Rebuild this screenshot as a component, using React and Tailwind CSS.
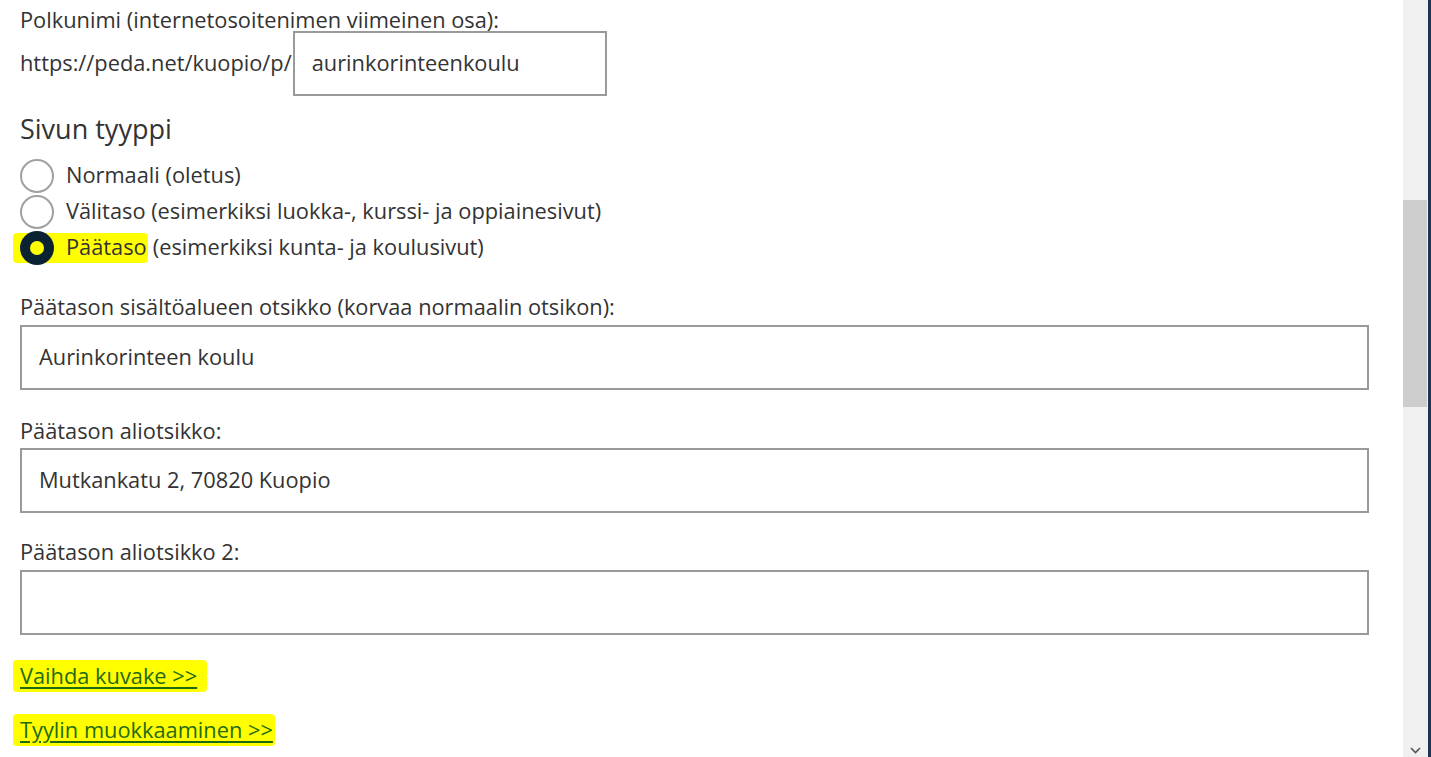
import React from 'react';

const Radio = ({ checked }) =>
  checked ? (
    <span className="flex h-[34px] w-[34px] shrink-0 items-center justify-center rounded-full bg-[#0b2233]">
      <span className="h-[14px] w-[14px] rounded-full bg-[#ffff00]" />
    </span>
  ) : (
    <span className="h-[34px] w-[34px] shrink-0 rounded-full border-2 border-[#a0a0a0] bg-white" />
  );

const App = () => {
  return (
    <div
      className="flex h-[757px] w-[1431px] overflow-hidden bg-white text-[#333333]"
      style={{ fontFamily: '"Open Sans", "Noto Sans", sans-serif' }}
    >
      <main className="flex w-[1403px] flex-col pl-[20px] text-[21.8px]">
        <div className="pt-[9px] leading-[22px]">
          Polkunimi (internetosoitenimen viimeinen osa):
        </div>

        <div className="flex h-[65px] items-center">
          <span>https://peda.net/kuopio/p/</span>
          <div className="ml-[1px] flex h-[65px] w-[314px] items-center border-2 border-[#9a9a9a] px-[17px]">
            aurinkorinteenkoulu
          </div>
        </div>

        <h2 className="pt-[18px] pb-[13px] text-[27px] leading-[30px]">Sivun tyyppi</h2>

        <div className="flex flex-col">
          <label className="flex h-[36px] items-center gap-[12px] pt-[1px]">
            <Radio />
            <span>Normaali (oletus)</span>
          </label>
          <label className="flex h-[36px] items-center gap-[12px] pt-[1px]">
            <Radio />
            <span>Välitaso (esimerkiksi luokka-, kurssi- ja oppiainesivut)</span>
          </label>
          <label className="flex h-[36px] items-center pt-[1px]">
            <span className="-ml-[7px] flex h-[30px] items-center gap-[12px] rounded-sm bg-[#ffff00] pl-[7px] pr-[1px]">
              <Radio checked />
              <span>Päätaso</span>
            </span>
            <span className="ml-[5px]">(esimerkiksi kunta- ja koulusivut)</span>
          </label>
        </div>

        <div className="pt-[31px] leading-[22px]">
          Päätason sisältöalueen otsikko (korvaa normaalin otsikon):
        </div>
        <div className="mt-[7px] flex h-[65px] w-[1349px] items-center border-2 border-[#9a9a9a] px-[17px]">
          Aurinkorinteen koulu
        </div>

        <div className="pt-[30px] leading-[22px]">Päätason aliotsikko:</div>
        <div className="mt-[6px] flex h-[65px] w-[1349px] items-center border-2 border-[#9a9a9a] px-[17px]">
          Mutkankatu 2, 70820 Kuopio
        </div>

        <div className="pt-[28px] leading-[22px]">Päätason aliotsikko 2:</div>
        <div className="mt-[7px] flex h-[65px] w-[1349px] items-center border-2 border-[#9a9a9a] px-[17px]" />

        <div className="mt-[25px]">
          <a
            href="#"
            className="-ml-[7px] inline-block rounded-sm bg-[#ffff00] py-[5px] pl-[7px] pr-[10px] leading-[22px] text-[#1f6b12] underline underline-offset-[3px]"
          >
            Vaihda kuvake &gt;&gt;
          </a>
        </div>
        <div className="mt-[21px]">
          <a
            href="#"
            className="-ml-[7px] inline-block rounded-sm bg-[#ffff00] py-[5px] pl-[7px] pr-[2px] leading-[22px] text-[#1f6b12] underline underline-offset-[3px]"
          >
            Tyylin muokkaaminen &gt;&gt;
          </a>
        </div>
      </main>

      <aside className="relative h-full w-[25px] bg-[#f0f0f0]">
        <div className="absolute left-0 top-[200px] h-[207px] w-[24px] bg-[#cdcdcd]" />
        <svg className="absolute bottom-[3px] left-[7px]" width="11" height="7" viewBox="0 0 11 7">
          <path d="M1 1l4.5 4.5L10 1" fill="none" stroke="#555" strokeWidth="1.6" />
        </svg>
      </aside>
      <div className="h-full w-[3px] bg-[#1d3550]" />
    </div>
  );
};

export default App;
